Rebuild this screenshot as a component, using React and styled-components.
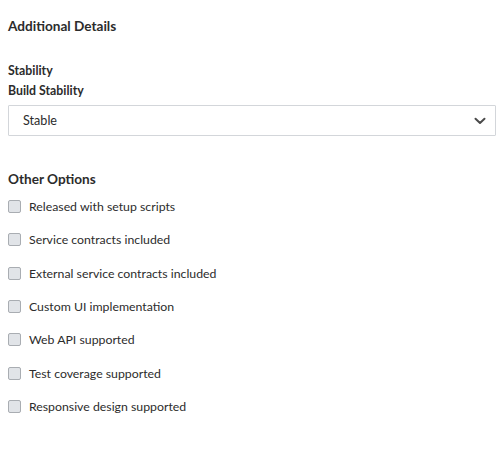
import styled, { createGlobalStyle } from "styled-components";

const GlobalStyle = createGlobalStyle`
  body {
    margin: 0;
    background: #ffffff;
    font-family: Lato, "Noto Sans", sans-serif;
    color: #2c2c2c;
  }
`;

const options = [
  "Released with setup scripts",
  "Service contracts included",
  "External service contracts included",
  "Custom UI implementation",
  "Web API supported",
  "Test coverage supported",
  "Responsive design supported",
];

const Chevron = () => (
  <svg width="12" height="8" viewBox="0 0 12 8" fill="none">
    <path d="M1.5 1.8 L6 6 L10.5 1.8" stroke="#4b4b4b" strokeWidth="2" strokeLinecap="round" strokeLinejoin="round" />
  </svg>
);

const App = () => {
  return (
    <Page>
      <GlobalStyle />
      <Heading>Additional Details</Heading>
      <Field>
        <Label>Stability</Label>
        <Label>Build Stability</Label>
        <Select>
          <span>Stable</span>
          <Chevron />
        </Select>
      </Field>
      <Heading $top={34}>Other Options</Heading>
      <OptionList>
        {options.map((text) => (
          <Option key={text}>
            <Box />
            <span>{text}</span>
          </Option>
        ))}
      </OptionList>
    </Page>
  );
};

export default App;

const Page = styled.div`
  display: flex;
  flex-direction: column;
  padding: 17px 5px 0 8px;
`;

const Heading = styled.div`
  font-size: 13.6px;
  font-weight: 700;
  line-height: 18px;
  color: #2c2c2c;
  margin-top: ${(p) => p.$top || 0}px;
`;

const Field = styled.div`
  display: flex;
  flex-direction: column;
  margin-top: 26px;
`;

const Label = styled.div`
  font-size: 12.3px;
  font-weight: 700;
  line-height: 20px;
  color: #2c2c2c;
`;

const Select = styled.div`
  display: flex;
  align-items: center;
  justify-content: space-between;
  height: 29px;
  margin-top: 4px;
  padding: 0 9px 0 14px;
  border: 1px solid #d3d6da;
  border-radius: 1px;
  font-size: 12.6px;
  color: #2c2c2c;
`;

const OptionList = styled.div`
  display: flex;
  flex-direction: column;
  margin-top: 2px;
`;

const Option = styled.label`
  display: flex;
  align-items: center;
  gap: 8px;
  height: 33.3px;
  font-size: 12.3px;
  color: #2c2c2c;
`;

const Box = styled.span`
  box-sizing: border-box;
  width: 13px;
  height: 13px;
  border: 1px solid #a9adb2;
  border-radius: 2px;
  background: #e1e4e8;
`;
